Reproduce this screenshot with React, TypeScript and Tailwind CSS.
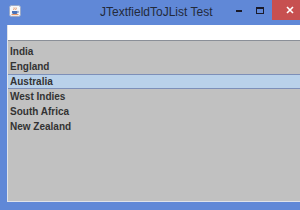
import React from 'react'

const countries = ['India', 'England', 'Australia', 'West Indies', 'South Africa', 'New Zealand']

function JavaIcon() {
  return (
    <svg width="12" height="12" viewBox="0 0 12 12">
      <rect x="0.5" y="0.5" width="11" height="11" rx="2" fill="#f4f6fa" stroke="#9aa9c8" />
      <path d="M5 2.5c1 1-1 1.5 0 2.5M7 2.5c1 1-1 1.5 0 2.5" stroke="#e0702a" strokeWidth="0.8" fill="none" />
      <path d="M3 6h5.5v1.5c0 1-1 1.5-2 1.5h-1.5c-1 0-2-.5-2-1.5z" fill="#4a72b8" />
      <path d="M8.5 6.3h.8c.6 0 .6 1.2 0 1.2h-.8" stroke="#4a72b8" strokeWidth="0.6" fill="none" />
      <rect x="2.5" y="9.3" width="7" height="0.8" fill="#e0702a" />
    </svg>
  )
}

export default function App() {
  const selected = 2

  return (
    <div className="w-[300px] h-[210px] bg-[#6088d7] flex flex-col overflow-hidden">

      {/* title bar */}
      <div className="h-[25px] flex items-start relative">
        <div className="pl-[9px] pt-[5px]">
          <JavaIcon />
        </div>
        <div
          className="absolute left-[100px] top-[4px] text-[12px] leading-[16px] text-[#232a3a]"
          style={{ fontFamily: '"Liberation Sans", Arial, sans-serif' }}
        >
          JTextfieldToJList Test
        </div>
        <div className="ml-auto flex items-start">
          <div className="w-[20px] h-[20px] flex items-center justify-center">
            <div className="w-[6px] h-[2px] bg-[#1a1a2a] mt-[2px]" />
          </div>
          <div className="w-[22px] h-[20px] flex items-center justify-center mr-[1px]">
            <div className="w-[8px] h-[7px] border border-[#1a1a2a] border-t-2" />
          </div>
          <div className="w-[28px] h-[20px] bg-[#c75050] flex items-center justify-center pl-[8px]">
            <svg width="8" height="8" viewBox="0 0 8 8">
              <path d="M1 1l6 6M7 1l-6 6" stroke="#fff" strokeWidth="1.6" />
            </svg>
          </div>
        </div>
      </div>

      {/* content */}
      <div className="flex-1 flex pl-[7px] pb-[8px]">
        <div className="flex-1 flex flex-col border-l border-b border-[#dfe3ea]">
          <div className="h-[16px] bg-white border-b border-[#8a8f98]" />
          <div
            className="flex-1 bg-[#c1c1c1] pt-[3px] text-[10px] font-bold text-[#333333]"
            style={{ fontFamily: '"Liberation Sans", Arial, sans-serif' }}
          >
            {countries.map((c, i) => (
              <div
                key={c}
                className={
                  i === selected
                    ? 'h-[15px] leading-[13px] pl-[2px] bg-[#b9d1ea] border-y border-[#7d8fb8]'
                    : 'h-[15px] leading-[15px] pl-[2px]'
                }
              >
                {c}
              </div>
            ))}
          </div>
        </div>
      </div>

    </div>
  )
}
